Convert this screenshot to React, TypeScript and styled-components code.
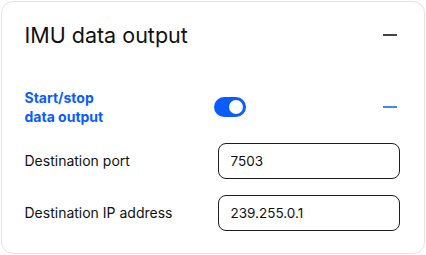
import React from "react";
import styled, { createGlobalStyle } from "styled-components";

const Global = createGlobalStyle`
  html, body { margin: 0; padding: 0; background: #ffffff; }
  body { padding: 1px 0 0 1px; font-family: Inter, "Noto Sans", sans-serif; }
`;

const Card = styled.div`
  box-sizing: border-box;
  width: 424px;
  height: 253px;
  border: 1.5px solid #e8e4de;
  border-radius: 12px;
  background: #ffffff;
  padding: 21px 23.5px 0 22.5px;
  display: flex;
  flex-direction: column;
`;

const Header = styled.div`
  display: flex;
  align-items: center;
  justify-content: space-between;
  height: 24px;
`;

const Title = styled.h1`
  margin: 0;
  font-size: 21.5px;
  line-height: 24px;
  font-weight: 400;
  color: #111111;
  letter-spacing: 0;
`;

const Dash = styled.span<{ $color: string }>`
  display: block;
  flex-shrink: 0;
  width: 14px;
  height: 2px;
  margin-right: 4px;
  background: ${(p) => p.$color};
`;

const ToggleRow = styled.div`
  display: flex;
  align-items: center;
  margin-top: 41px;
`;

const ToggleLabel = styled.div`
  width: 189px;
  flex-shrink: 0;
  font-size: 14px;
  line-height: 19px;
  font-weight: 700;
  color: #0a5cff;
`;

const Switch = styled.button<{ $on: boolean }>`
  position: relative;
  box-sizing: border-box;
  flex-shrink: 0;
  width: 32px;
  height: 20px;
  padding: 0;
  border: none;
  border-radius: 10px;
  background: ${(p) => (p.$on ? "#0a5cff" : "#c9c9c9")};
  cursor: pointer;
  &::after {
    content: "";
    position: absolute;
    top: 3px;
    left: ${(p) => (p.$on ? "15px" : "3px")};
    width: 14px;
    height: 14px;
    border-radius: 50%;
    background: #ffffff;
  }
`;

const Spacer = styled.div`
  flex: 1;
`;

const FieldRow = styled.div<{ $gap: number }>`
  display: flex;
  align-items: center;
  margin-top: ${(p) => p.$gap}px;
`;

const FieldLabel = styled.label`
  width: 193px;
  flex-shrink: 0;
  font-size: 14px;
  line-height: 18px;
  color: #111111;
`;

const Input = styled.input`
  box-sizing: border-box;
  flex-shrink: 0;
  width: 182px;
  height: 36px;
  border: 1px solid #1e1e1e;
  border-radius: 8px;
  padding: 0 12px;
  font-family: Inter, "Noto Sans", sans-serif;
  font-size: 13.5px;
  color: #111111;
  outline: none;
  background: #ffffff;
`;

export default function App() {
  const [on, setOn] = React.useState(true);
  return (
    <>
      <Global />
      <Card>
        <Header>
          <Title>IMU data output</Title>
          <Dash $color="#444444" />
        </Header>
        <ToggleRow>
          <ToggleLabel>
            Start/stop
            <br />
            data output
          </ToggleLabel>
          <Switch $on={on} onClick={() => setOn(!on)} aria-label="toggle" />
          <Spacer />
          <Dash $color="#3f86f7" />
        </ToggleRow>
        <FieldRow $gap={17}>
          <FieldLabel>Destination port</FieldLabel>
          <Input defaultValue="7503" />
        </FieldRow>
        <FieldRow $gap={16}>
          <FieldLabel>Destination IP address</FieldLabel>
          <Input defaultValue="239.255.0.1" />
        </FieldRow>
      </Card>
    </>
  );
}
